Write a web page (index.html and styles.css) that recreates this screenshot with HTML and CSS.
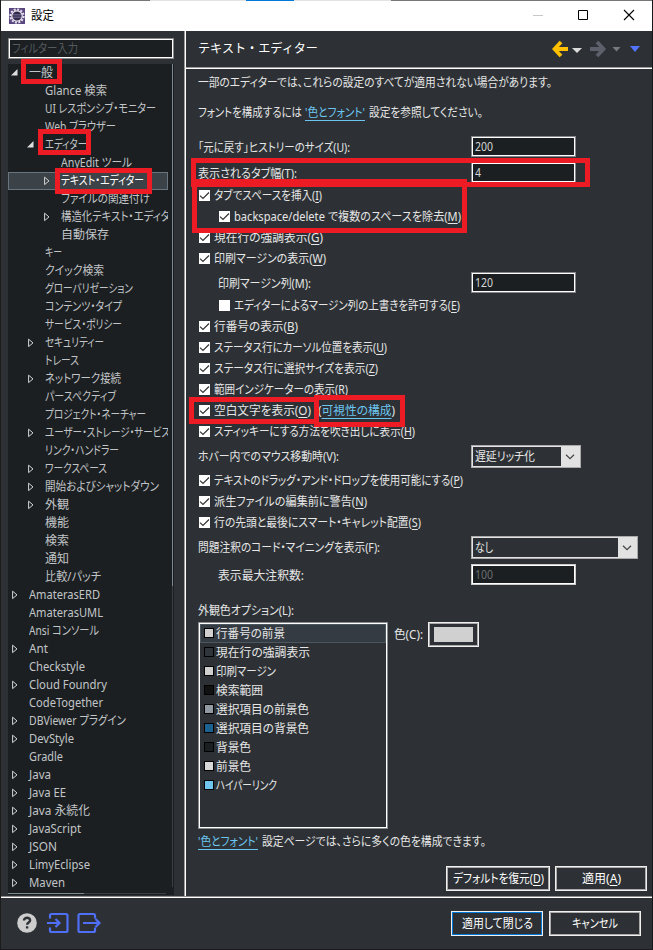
FILE: index.html
```html
<!DOCTYPE html>
<html lang="ja">
<head>
<meta charset="utf-8">
<title>設定</title>
<link rel="stylesheet" href="styles.css">
</head>
<body>
<svg class="defs" width="0" height="0">
  <symbol id="open" viewBox="0 0 7 7"><path d="M6.5 0v6.5H0z" fill="#dedede"/></symbol>
  <symbol id="closed" viewBox="0 0 6 10"><path d="M.6 1.2v7.4L5 4.9z" fill="none" stroke="#d4d4d4"/></symbol>
  <symbol id="tick" viewBox="0 0 11 11"><path d="M1 5.6 4 8.5 10 2.5" fill="none" stroke="#333" stroke-width="1.2"/></symbol>
  <symbol id="chev" viewBox="0 0 10 6"><path d="M1 .8 5 4.6 9 .8" fill="none" stroke="#444" stroke-width="1.2"/></symbol>
</svg>
<div class="window">
  <header class="titlebar">
    <div class="strip"><i class="s1"></i><i class="s2"></i><i class="s3"></i><i class="s2b"></i><i class="s4"></i></div>
    <svg class="app" width="16" height="16" viewBox="0 0 16 16"><rect width="16" height="16" fill="#59467f"/><circle cx="8" cy="8" r="6.6" fill="none" stroke="#e5e2ec" stroke-width="2" stroke-dasharray="2 1.45"/><circle cx="8" cy="8" r="5.2" fill="#30294a" stroke="#eeeaf4" stroke-width="1.2"/><path d="M4 6.5h8M3.6 8h8.8M4 9.5h8" stroke="#77709a" stroke-width=".7"/></svg>
    <span class="caption" data-w="23">設定</span>
    <svg class="winbtns" width="103" height="12" viewBox="0 0 103 12"><path d="M0 6.5h10" stroke="#c8c8c8"/><path d="M45.5 1.5h9v9h-9z" fill="none" stroke="#000"/><path d="m91 1 10 10M101 1 91 11" stroke="#000" stroke-width="1.1"/></svg>
  </header>
  <div class="body">
    <aside class="side">
      <div class="filter"><span data-w="66">フィルター入力</span></div>
      <div class="treebox">
        <ul class="tree">
          <li><svg class="o"><use href="#open"/></svg><span data-w="24">一般</span></li>
          <li class="l1"><span data-w="62">Glance 検索</span></li>
          <li class="l1"><span data-w="111">UI レスポンシブ・モニター</span></li>
          <li class="l1"><span data-w="71">Web ブラウザー</span></li>
          <li class="l1"><svg class="o"><use href="#open"/></svg><span data-w="42">エディター</span></li>
          <li class="l2"><span data-w="71">AnyEdit ツール</span></li>
          <li class="l2 sel"><svg class="c"><use href="#closed"/></svg><span data-w="83">テキスト・エディター</span></li>
          <li class="l2"><span data-w="89">ファイルの関連付け</span></li>
          <li class="l2"><svg class="c"><use href="#closed"/></svg><span data-w="119">構造化テキスト・エディター</span></li>
          <li class="l2"><span data-w="48">自動保存</span></li>
          <li class="l1"><span data-w="17">キー</span></li>
          <li class="l1"><span data-w="59">クイック検索</span></li>
          <li class="l1"><span data-w="88">グローバリゼーション</span></li>
          <li class="l1"><span data-w="77">コンテンツ・タイプ</span></li>
          <li class="l1"><span data-w="77">サービス・ポリシー</span></li>
          <li class="l1"><svg class="c"><use href="#closed"/></svg><span data-w="59">セキュリティー</span></li>
          <li class="l1"><span data-w="34">トレース</span></li>
          <li class="l1"><svg class="c"><use href="#closed"/></svg><span data-w="76">ネットワーク接続</span></li>
          <li class="l1"><span data-w="71">パースペクティブ</span></li>
          <li class="l1"><span data-w="101">プロジェクト・ネーチャー</span></li>
          <li class="l1"><svg class="c"><use href="#closed"/></svg><span data-w="125">ユーザー・ストレージ・サービス</span></li>
          <li class="l1"><span data-w="74">リンク・ハンドラー</span></li>
          <li class="l1"><svg class="c"><use href="#closed"/></svg><span data-w="62">ワークスペース</span></li>
          <li class="l1"><svg class="c"><use href="#closed"/></svg><span data-w="114">開始およびシャットダウン</span></li>
          <li class="l1"><svg class="c"><use href="#closed"/></svg><span data-w="24">外観</span></li>
          <li class="l1"><span data-w="24">機能</span></li>
          <li class="l1"><span data-w="24">検索</span></li>
          <li class="l1"><span data-w="24">通知</span></li>
          <li class="l1"><span data-w="56">比較/パッチ</span></li>
          <li><svg class="c"><use href="#closed"/></svg><span data-w="71">AmaterasERD</span></li>
          <li><span data-w="74">AmaterasUML</span></li>
          <li><span data-w="70">Ansi コンソール</span></li>
          <li><svg class="c"><use href="#closed"/></svg><span data-w="19">Ant</span></li>
          <li><span data-w="56">Checkstyle</span></li>
          <li><svg class="c"><use href="#closed"/></svg><span data-w="78">Cloud Foundry</span></li>
          <li><span data-w="74">CodeTogether</span></li>
          <li><svg class="c"><use href="#closed"/></svg><span data-w="97">DBViewer プラグイン</span></li>
          <li><svg class="c"><use href="#closed"/></svg><span data-w="45">DevStyle</span></li>
          <li><span data-w="34">Gradle</span></li>
          <li><svg class="c"><use href="#closed"/></svg><span data-w="22">Java</span></li>
          <li><svg class="c"><use href="#closed"/></svg><span data-w="37">Java EE</span></li>
          <li><svg class="c"><use href="#closed"/></svg><span data-w="61">Java 永続化</span></li>
          <li><svg class="c"><use href="#closed"/></svg><span data-w="52">JavaScript</span></li>
          <li><svg class="c"><use href="#closed"/></svg><span data-w="28">JSON</span></li>
          <li><svg class="c"><use href="#closed"/></svg><span data-w="61">LimyEclipse</span></li>
          <li><svg class="c"><use href="#closed"/></svg><span data-w="36">Maven</span></li>
        </ul>
        <div class="vbar"></div>
        <div class="hbar"></div>
      </div>
    </aside>
    <main class="main">
      <div class="head">
        <span class="title" data-w="120">テキスト・エディター</span>
        <svg width="90" height="18" viewBox="0 0 90 18"><path d="M16 9H3M9 2 2.500 9 9 16" fill="none" stroke="#ffc000" stroke-width="3.8"/><path d="M20 8h10l-5 5z" fill="#dcdcdc"/><path d="M38 9h13M45 2l6.500 7L45 16" fill="none" stroke="#5d606b" stroke-width="3.800"/><path d="M60.500 7h8l-4 4.500z" fill="#777a7d"/><path d="M78 6h10l-5 6z" fill="#5274ff"/></svg>
      </div>
      <div class="page">
        <div class="row"><span data-w="354">一部のエディターでは、これらの設定のすべてが適用されない場合があります。</span></div>
        <div class="row g9"><span data-w="104">フォントを構成するには</span><a class="ml3" data-w="60">'色とフォント'</a><span class="ml4" data-w="114">設定を参照してください。</span></div>
        <div class="row g14"><span class="lab" data-w="152">「元に戻す」ヒストリーのサイズ(U):</span><b class="field"><span data-w="18">200</span></b></div>
        <div class="row g5"><span class="lab" data-w="99">表示されるタブ幅(T):</span><b class="field"><span data-w="6">4</span></b></div>
        <div class="row g1"><i class="cb"><svg><use href="#tick"/></svg></i><span data-w="108">タブでスペースを挿入(<u>I</u>)</span></div>
        <div class="row in"><i class="cb"><svg><use href="#tick"/></svg></i><span data-w="227">backspace/delete で複数のスペースを除去(<u>M</u>)</span></div>
        <div class="row"><i class="cb"><svg><use href="#tick"/></svg></i><span data-w="109">現在行の強調表示(<u>G</u>)</span></div>
        <div class="row"><i class="cb"><svg><use href="#tick"/></svg></i><span data-w="112">印刷マージンの表示(<u>W</u>)</span></div>
        <div class="row g4 in"><span class="lab" data-w="93">印刷マージン列(M):</span><b class="field"><span data-w="18">120</span></b></div>
        <div class="row g1 in"><i class="cb"></i><span data-w="226">エディターによるマージン列の上書きを許可する(<u>E</u>)</span></div>
        <div class="row"><i class="cb"><svg><use href="#tick"/></svg></i><span data-w="84">行番号の表示(<u>B</u>)</span></div>
        <div class="row"><i class="cb"><svg><use href="#tick"/></svg></i><span data-w="173">ステータス行にカーソル位置を表示(<u>U</u>)</span></div>
        <div class="row"><i class="cb"><svg><use href="#tick"/></svg></i><span data-w="164">ステータス行に選択サイズを表示(<u>Z</u>)</span></div>
        <div class="row"><i class="cb"><svg><use href="#tick"/></svg></i><span data-w="134">範囲インジケーターの表示(<u>R</u>)</span></div>
        <div class="row"><i class="cb"><svg><use href="#tick"/></svg></i><span data-w="97">空白文字を表示(<u>O</u>)</span><span class="ml7" data-w="77">(<a>可視性の構成</a>)</span></div>
        <div class="row"><i class="cb"><svg><use href="#tick"/></svg></i><span data-w="201">スティッキーにする方法を吹き出しに表示(<u>H</u>)</span></div>
        <div class="row g4"><span data-w="141">ホバー内でのマウス移動時(V):</span><b class="combo short"><span data-w="60">遅延リッチ化</span><i><svg><use href="#chev"/></svg></i></b></div>
        <div class="row g3"><i class="cb"><svg><use href="#tick"/></svg></i><span data-w="249">テキストのドラッグ・アンド・ドロップを使用可能にする(<u>P</u>)</span></div>
        <div class="row"><i class="cb"><svg><use href="#tick"/></svg></i><span data-w="153">派生ファイルの編集前に警告(<u>N</u>)</span></div>
        <div class="row"><i class="cb"><svg><use href="#tick"/></svg></i><span data-w="207">行の先頭と最後にスマート・キャレット配置(<u>S</u>)</span></div>
        <div class="row g4"><span data-w="182">問題注釈のコード・マイニングを表示(F):</span><b class="combo long"><span data-w="18">なし</span><i><svg><use href="#chev"/></svg></i></b></div>
        <div class="row g7 in"><span data-w="86">表示最大注釈数:</span><b class="field off"><span data-w="18">100</span></b></div>
        <div class="row g14"><span data-w="96">外観色オプション(L):</span></div>
        <div class="colors">
          <ul class="list">
            <li class="cur"><i class="sw c1"></i><span data-w="69">行番号の前景</span></li>
            <li><i class="sw c2"></i><span data-w="94">現在行の強調表示</span></li>
            <li><i class="sw c1"></i><span data-w="60">印刷マージン</span></li>
            <li><i class="sw c3"></i><span data-w="47">検索範囲</span></li>
            <li><i class="sw c4"></i><span data-w="93">選択項目の前景色</span></li>
            <li><i class="sw c5"></i><span data-w="93">選択項目の背景色</span></li>
            <li><i class="sw c6"></i><span data-w="35">背景色</span></li>
            <li><i class="sw c7"></i><span data-w="35">前景色</span></li>
            <li><i class="sw c8"></i><span data-w="61">ハイパーリンク</span></li>
          </ul>
          <div class="pick"><span data-w="29">色(C):</span><b class="colorbtn"><i></i></b></div>
        </div>
        <div class="row g2"><a data-w="60">'色とフォント'</a><span class="ml4" data-w="224">設定ページでは、さらに多くの色を構成できます。</span></div>
        <div class="actions"><b class="btn wide"><span data-w="91">デフォルトを復元(<u>D</u>)</span></b><b class="btn"><span data-w="39">適用(<u>A</u>)</span></b></div>
      </div>
    </main>
  </div>
  <footer class="foot">
    <svg width="86" height="22" viewBox="0 0 86 22"><circle cx="10" cy="11" r="9.800" fill="#cdcdcd"/><path d="M7 8.600C7 4.800 13.300 5 13.100 8.500c-.1 2-3 2-3 4.200M10.100 14.300v2.300" fill="none" stroke="#2d3135" stroke-width="2.400"/><g fill="none" stroke="#4f70f6" stroke-width="2.200"><path d="M33 6.500V3.500q0-1.500 1.500-1.500H49q1.500 0 1.500 1.500v15q0 1.500-1.500 1.500H34.500q-1.500 0-1.500-1.500v-3M30 11h12M38.500 7l4 4-4 4"/><path d="M78 6.500V3.500Q78 2 76.500 2H63q-1.500 0-1.500 1.500v15q0 1.500 1.500 1.500h13.500q1.500 0 1.500-1.500v-3M66 11h16M78.500 7l4 4-4 4"/></g></svg>
    <b class="btn primary"><span data-w="71">適用して閉じる</span></b><b class="btn"><span data-w="46">キャンセル</span></b>
  </footer>
  <div class="mark m1"></div><div class="mark m2"></div><div class="mark m3"></div><div class="mark m4"></div><div class="mark m5"></div><div class="mark m6"></div><div class="mark m7"></div>
</div>
<script src="fit.js"></script>
</body>
</html>
```
FILE: styles.css
```css
* { box-sizing: border-box; margin: 0; padding: 0; }
body { width: 653px; height: 950px; overflow: hidden; background: #1b1f22; font: 12px/18px "Noto Sans", "Noto Sans CJK JP", sans-serif; font-feature-settings: "palt"; color: #e6e6e6; }
ul { list-style: none; }
b { font-weight: 400; }
i { font-style: normal; display: block; }
svg { display: block; flex: none; }
.defs { position: absolute; }
[data-w] { display: inline-block; white-space: nowrap; transform-origin: 0 50%; flex: none; }
u { text-underline-offset: 2px; }
a { color: #6cc5f0; text-decoration: underline; text-underline-offset: 3px; }
.window { position: relative; width: 653px; height: 950px; display: flex; flex-direction: column; border-left: 1px solid #1c1c1c; border-right: 1px solid #15181a; border-bottom: 1px solid #1c1820; background: #2d3135; }
.titlebar { height: 31px; flex: none; background: #fff; color: #000; display: flex; flex-wrap: wrap; align-items: center; align-content: flex-start; padding-left: 8px; }
.strip { display: flex; width: 651px; height: 1px; margin-left: -8px; flex: none; }
.s1 { width: 149px; background: #777; }
.s2 { width: 96px; background: #e3e3e3; }
.s3 { width: 48px; background: #0078d7; }
.s2b { width: 97px; background: #e3e3e3; }
.s4 { flex: 1; background: #777; }
.app { margin-top: 5px; }
.caption { margin-left: 6px; margin-top: 6px; }
.winbtns { margin: 4px 16px 0 auto; }
.body { display: flex; height: 867px; flex: none; border-bottom: 1px solid #fff; box-shadow: inset 0 -1px #8d8d8d; padding-bottom: 1px; }
.side { width: 183px; flex: none; padding: 7px 0 0 7px; }
.filter { width: 166px; height: 21px; border: 1px solid #888; box-shadow: inset 0 0 0 1px #fff; background: #1b1f22; color: #555a5e; padding-left: 3px; line-height: 19px; }
.treebox { margin-top: 5px; width: 166px; height: 831px; background: #1b1f22; display: grid; grid-template: 829px 2px / 160px 6px; }
.tree { overflow: hidden; color: #c2c5c7; grid-column: 1; }
.tree li { height: 18px; padding-left: 3px; display: flex; align-items: center; }
.tree .l1 { padding-left: 19px; }
.tree .l2 { padding-left: 35px; }
.tree span { margin-left: 18px; }
.tree svg + span { margin-left: 11px; }
.o { width: 7px; height: 7px; margin-top: -1px; }
.c { width: 6px; height: 10px; margin-right: 1px; margin-left: 1px; }
.tree svg.c + span { margin-left: 10px; }
.tree .sel { background: #3b4248; outline: 1px solid #68757f; outline-offset: -1px; color: #fff; }
.vbar { width: 1px; height: 823px; margin-left: 4px; background: linear-gradient(#7b8993 522px, #3a4045 522px); }
.hbar { width: 158px; height: 1px; background: linear-gradient(90deg, #7b8993 76px, #3a4045 76px); }
.main { flex: 1; border-left: 1px solid #999; box-shadow: inset 1px 0 #fff; padding-left: 1px; }
.head { height: 38px; border-bottom: 1px solid #fff; box-shadow: inset 0 -1px #999; display: flex; align-items: center; justify-content: space-between; padding: 0 10px 1px 12px; }
.title { font-size: 12.5px; font-feature-settings: normal; color: #fff; }
.page { padding: 3px 0 0 12px; }
.row { height: 21px; display: flex; align-items: center; width: 440px; }
.in { padding-left: 20px; }
.g1 { margin-top: 1px; } .g2 { margin-top: 2px; } .g3 { margin-top: 3px; } .g4 { margin-top: 4px; } .g5 { margin-top: 5px; }
.g7 { margin-top: 7px; } .g9 { margin-top: 9px; } .g14 { margin-top: 14px; }
.ml3 { margin-left: 3px; } .ml4 { margin-left: 4px; } .ml7 { margin-left: 7px; }
.cb { width: 11px; height: 11px; background: #fff; margin: 0 4px 0 1px; flex: none; }
.cb svg { width: 11px; height: 11px; }
.field { width: 105px; height: 21px; margin: -1px 62px 1px auto; flex: none; border: 1px solid #84868b; box-shadow: inset 0 0 0 1px #fff; background: #1b1f22; padding-left: 3px; display: flex; align-items: center; color: #d5d5d5; }
.off { border-color: #ccc; color: #6a6d70; }
.combo { height: 23px; margin-left: auto; flex: none; border: 1px solid #aaa; box-shadow: inset 0 0 0 1px #e3e3e3; display: flex; align-items: center; padding-left: 3px; }
.combo i { width: 19px; height: 21px; background: #e2e2e2; margin-left: auto; padding: 8px 4px; }
.combo svg { width: 10px; height: 6px; }
.short { width: 110px; margin-right: 57px; }
.long { width: 167px; }
.colors { display: flex; margin-top: 1px; height: 207px; }
.list { width: 190px; height: 207px; border: 1px solid #888c90; box-shadow: inset 0 0 0 1px #fff; padding: 1px; }
.list li { height: 19px; display: flex; align-items: center; padding-left: 4px; }
.list span { margin-left: 2px; }
.cur { background: #353b42; border: 1px solid #4c565e; padding-left: 3px !important; }
.sw { width: 10px; height: 10px; border: 1px solid #000; margin-top: -1px; }
.c1 { background: #d0d0d0; } .c2 { background: #2f353b; } .c3 { background: #111; } .c4 { background: #929ba3; }
.c5 { background: #1b6291; } .c6 { background: #1b1f22; } .c7 { background: #d8d8d8; } .c8 { background: #6fc5ee; }
.pick { display: flex; align-items: center; height: 25px; margin-left: 6px; gap: 5px; }
.colorbtn, .btn { border: 1px solid #f0f0f0; box-shadow: inset 0 0 0 1px #aaa; height: 25px; }
.colorbtn { width: 51px; padding: 4px 5px; }
.colorbtn i { height: 15px; background: #d0d0d0; }
.btn { width: 92px; display: flex; align-items: center; justify-content: center; color: #fff; }
.wide { width: 104px; }
.actions { display: flex; gap: 5px; justify-content: flex-end; margin: 14px 5px 0 0; }
.foot { flex: 1; display: flex; align-items: flex-start; padding: 13px 11px 0 16px; gap: 6px; }
.foot svg { margin: 1px auto 0 0; }
.primary { box-shadow: inset 0 0 0 1px #0078d7; }
.mark { position: absolute; border: 5px solid #ed1c24; }
.m1 { left: 20px; top: 59px; width: 41px; height: 25px; }
.m2 { left: 37px; top: 129px; width: 53px; height: 26px; }
.m3 { left: 54px; top: 168px; width: 97px; height: 26px; }
.m4 { left: 190px; top: 158px; width: 399px; height: 29px; }
.m5 { left: 191px; top: 179px; width: 275px; height: 54px; border-top-width: 8px; }
.m6 { left: 188px; top: 397px; width: 130px; height: 27px; }
.m7 { left: 313px; top: 395px; width: 91px; height: 32px; }
```
FILE: fit.js
```js
// Condenses each label horizontally to its nominal width.
document.querySelectorAll('[data-w]').forEach(function (el) {
  var target = Number(el.dataset.w);
  var natural = el.getBoundingClientRect().width;
  el.style.transform = 'scaleX(' + target / natural + ')';
  el.style.marginRight = (target - natural) + 'px';
});
```
